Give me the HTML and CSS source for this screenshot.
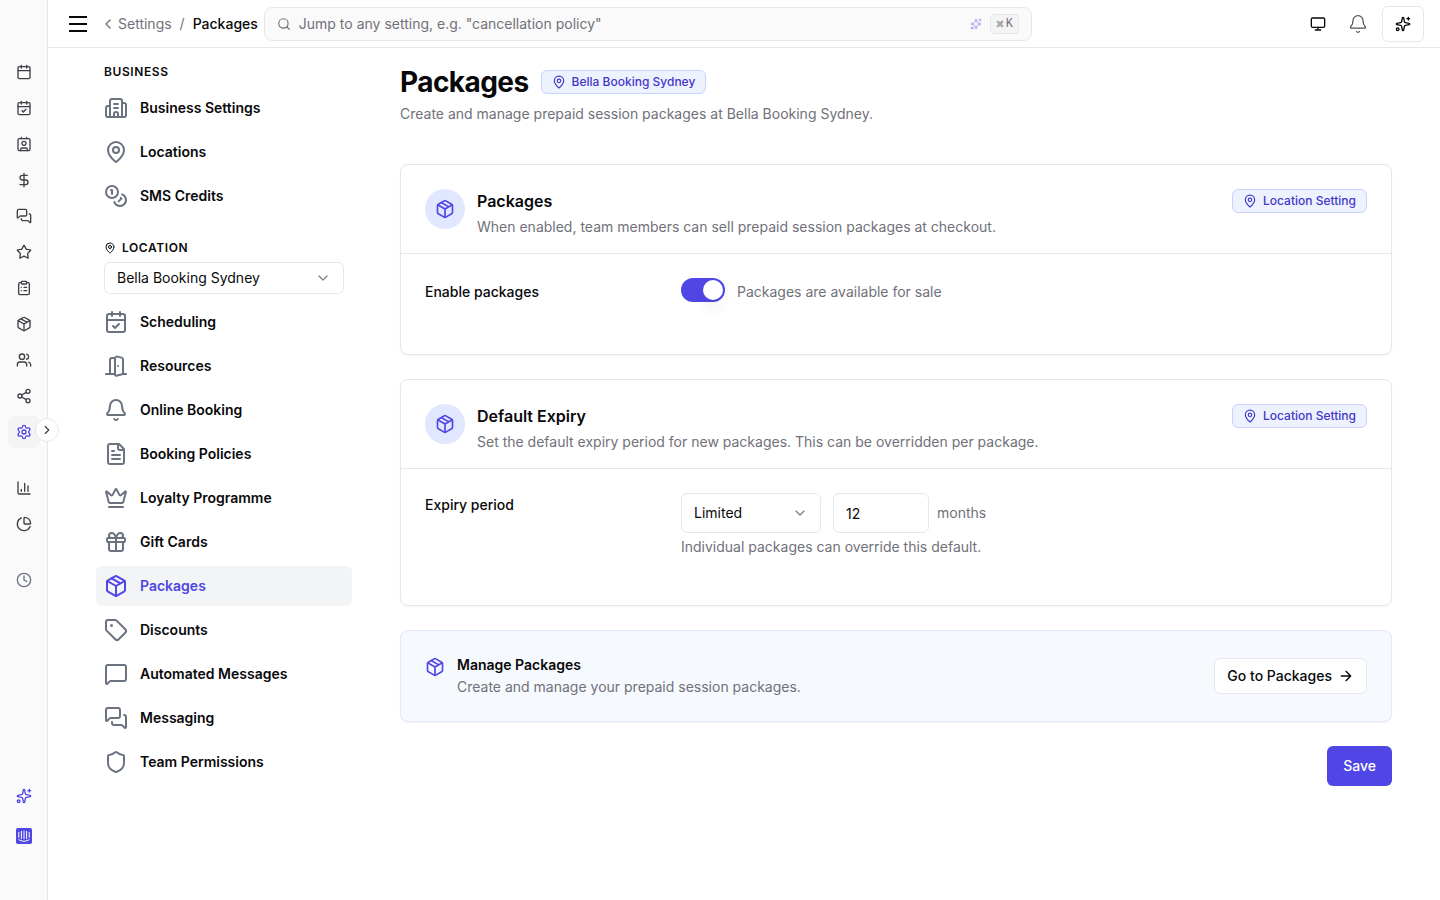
FILE: index.html
```html
<!DOCTYPE html>
<html lang="en">
<head>
  <meta charset="UTF-8" />
  <meta name="viewport" content="width=device-width, initial-scale=1.0" />
  <title>Packages - Settings</title>
  <link rel="stylesheet" href="styles.css">
</head>
<body>

  <!-- ICON SPRITE -->
  <svg class="sprite" aria-hidden="true">
    <symbol id="i-calendar" viewBox="0 0 24 24"><path d="M8 2v4M16 2v4M3 10h18"/><rect x="3" y="4" width="18" height="18" rx="2"/></symbol>
    <symbol id="i-calendar-check" viewBox="0 0 24 24"><path d="M8 2v4M16 2v4M3 10h18M9 16l2 2 4-4"/><rect x="3" y="4" width="18" height="18" rx="2"/></symbol>
    <symbol id="i-contact" viewBox="0 0 24 24"><path d="M16 2v2M8 2v2M7 22v-2a2 2 0 0 1 2-2h6a2 2 0 0 1 2 2v2"/><circle cx="12" cy="11" r="3"/><rect x="3" y="4" width="18" height="18" rx="2"/></symbol>
    <symbol id="i-dollar" viewBox="0 0 24 24"><path d="M12 2v20M17 5H9.5a3.5 3.5 0 0 0 0 7h5a3.5 3.5 0 0 1 0 7H6"/></symbol>
    <symbol id="i-messages" viewBox="0 0 24 24"><path d="M16 10a2 2 0 0 1-2 2H6.828a2 2 0 0 0-1.414.586l-2.202 2.202A.71.71 0 0 1 2 14.286V4a2 2 0 0 1 2-2h10a2 2 0 0 1 2 2z"/><path d="M20 9a2 2 0 0 1 2 2v10.286a.71.71 0 0 1-1.212.502l-2.202-2.202A2 2 0 0 0 17.172 19H10a2 2 0 0 1-2-2v-1"/></symbol>
    <symbol id="i-message" viewBox="0 0 24 24"><path d="M22 17a2 2 0 0 1-2 2H6.828a2 2 0 0 0-1.414.586l-2.202 2.202A.71.71 0 0 1 2 21.286V5a2 2 0 0 1 2-2h16a2 2 0 0 1 2 2z"/></symbol>
    <symbol id="i-star" viewBox="0 0 24 24"><path d="M11.525 2.295a.53.53 0 0 1 .95 0l2.31 4.679a2.123 2.123 0 0 0 1.595 1.16l5.166.756a.53.53 0 0 1 .294.904l-3.736 3.638a2.123 2.123 0 0 0-.611 1.878l.882 5.14a.53.53 0 0 1-.771.56l-4.618-2.428a2.122 2.122 0 0 0-1.973 0L6.396 21.01a.53.53 0 0 1-.77-.56l.881-5.139a2.122 2.122 0 0 0-.611-1.879L2.16 9.795a.53.53 0 0 1 .294-.906l5.165-.755a2.122 2.122 0 0 0 1.597-1.16z"/></symbol>
    <symbol id="i-clipboard" viewBox="0 0 24 24"><rect x="8" y="2" width="8" height="4" rx="1"/><path d="M16 4h2a2 2 0 0 1 2 2v14a2 2 0 0 1-2 2H6a2 2 0 0 1-2-2V6a2 2 0 0 1 2-2h2M12 11h4M12 16h4M8 11h.01M8 16h.01"/></symbol>
    <symbol id="i-package" viewBox="0 0 24 24"><path d="M11 21.73a2 2 0 0 0 2 0l7-4A2 2 0 0 0 21 16V8a2 2 0 0 0-1-1.73l-7-4a2 2 0 0 0-2 0l-7 4A2 2 0 0 0 3 8v8a2 2 0 0 0 1 1.73z"/><path d="M12 22V12M3.29 7L12 12l8.71-5M7.5 4.27l9 5.15"/></symbol>
    <symbol id="i-users" viewBox="0 0 24 24"><path d="M16 21v-2a4 4 0 0 0-4-4H6a4 4 0 0 0-4 4v2M16 3.13a4 4 0 0 1 0 7.75M22 21v-2a4 4 0 0 0-3-3.87"/><circle cx="9" cy="7" r="4"/></symbol>
    <symbol id="i-share" viewBox="0 0 24 24"><circle cx="18" cy="5" r="3"/><circle cx="6" cy="12" r="3"/><circle cx="18" cy="19" r="3"/><path d="M8.59 13.51l6.83 3.98M15.41 6.51l-6.82 3.98"/></symbol>
    <symbol id="i-settings" viewBox="0 0 24 24"><path d="M9.671 4.136a2.34 2.34 0 0 1 4.659 0 2.34 2.34 0 0 0 3.319 1.915 2.34 2.34 0 0 1 2.33 4.033 2.34 2.34 0 0 0 0 3.831 2.34 2.34 0 0 1-2.33 4.033 2.34 2.34 0 0 0-3.319 1.915 2.34 2.34 0 0 1-4.659 0 2.34 2.34 0 0 0-3.32-1.915 2.34 2.34 0 0 1-2.33-4.033 2.34 2.34 0 0 0 0-3.831A2.34 2.34 0 0 1 6.35 6.051a2.34 2.34 0 0 0 3.319-1.915"/><circle cx="12" cy="12" r="3"/></symbol>
    <symbol id="i-chart" viewBox="0 0 24 24"><path d="M3 3v16a2 2 0 0 0 2 2h16M18 17V9M13 17V5M8 17v-3"/></symbol>
    <symbol id="i-pie" viewBox="0 0 24 24"><path d="M21 12c.552 0 1.005-.449.95-.998a10 10 0 0 0-8.953-8.951c-.55-.055-.998.398-.998.95v8a1 1 0 0 0 1 1z"/><path d="M21.21 15.89A10 10 0 1 1 8 2.83"/></symbol>
    <symbol id="i-clock" viewBox="0 0 24 24"><circle cx="12" cy="12" r="10"/><path d="M12 6v6l4 2"/></symbol>
    <symbol id="i-sparkles" viewBox="0 0 24 24"><path d="M11.017 2.814a1 1 0 0 1 1.966 0l1.051 5.558a2 2 0 0 0 1.594 1.594l5.558 1.051a1 1 0 0 1 0 1.966l-5.558 1.051a2 2 0 0 0-1.594 1.594l-1.051 5.558a1 1 0 0 1-1.966 0l-1.051-5.558a2 2 0 0 0-1.594-1.594l-5.558-1.051a1 1 0 0 1 0-1.966l5.558-1.051a2 2 0 0 0 1.594-1.594zM20 2v4M22 4h-4"/><circle cx="4" cy="20" r="2"/></symbol>
    <symbol id="i-building" viewBox="0 0 24 24"><path d="M10 12h4M10 8h4M14 21v-3a2 2 0 0 0-4 0v3M6 10H4a2 2 0 0 0-2 2v7a2 2 0 0 0 2 2h16a2 2 0 0 0 2-2V9a2 2 0 0 0-2-2h-2"/><path d="M6 21V5a2 2 0 0 1 2-2h8a2 2 0 0 1 2 2v16"/></symbol>
    <symbol id="i-pin" viewBox="0 0 24 24"><path d="M20 10c0 4.993-5.539 10.193-7.399 11.799a1 1 0 0 1-1.202 0C9.539 20.193 4 14.993 4 10a8 8 0 0 1 16 0"/><circle cx="12" cy="10" r="3"/></symbol>
    <symbol id="i-coins" viewBox="0 0 24 24"><circle cx="8" cy="8" r="6"/><path d="M18.09 10.37A6 6 0 1 1 10.34 18M7 6h1v4M16.71 13.88l.7.71-2.82 2.82"/></symbol>
    <symbol id="i-door" viewBox="0 0 24 24"><path d="M11 20H2M11 4.562v16.157a1 1 0 0 0 1.242.97L19 20V5.562a2 2 0 0 0-1.515-1.94l-4-1A2 2 0 0 0 11 4.561zM11 4H8a2 2 0 0 0-2 2v14M14 12h.01M22 20h-3"/></symbol>
    <symbol id="i-bell" viewBox="0 0 24 24"><path d="M10.268 21a2 2 0 0 0 3.464 0M3.262 15.326A1 1 0 0 0 4 17h16a1 1 0 0 0 .74-1.673C19.41 13.956 18 12.499 18 8A6 6 0 0 0 6 8c0 4.499-1.411 5.956-2.738 7.326"/></symbol>
    <symbol id="i-file" viewBox="0 0 24 24"><path d="M15 2H6a2 2 0 0 0-2 2v16a2 2 0 0 0 2 2h12a2 2 0 0 0 2-2V7zM14 2v4a2 2 0 0 0 2 2h4M10 9H8M16 13H8M16 17H8"/></symbol>
    <symbol id="i-crown" viewBox="0 0 24 24"><path d="M11.562 3.266a.5.5 0 0 1 .876 0L15.39 8.87a1 1 0 0 0 1.516.294L21.183 5.5a.5.5 0 0 1 .798.519l-2.834 10.246a1 1 0 0 1-.956.734H5.81a1 1 0 0 1-.957-.734L2.02 6.02a.5.5 0 0 1 .798-.519l4.276 3.664a1 1 0 0 0 1.516-.294zM5 21h14"/></symbol>
    <symbol id="i-gift" viewBox="0 0 24 24"><rect x="3" y="8" width="18" height="4" rx="1"/><path d="M12 8v13M19 12v7a2 2 0 0 1-2 2H7a2 2 0 0 1-2-2v-7M7.5 8a2.5 2.5 0 0 1 0-5A4.8 8 0 0 1 12 8a4.8 8 0 0 1 4.5-5 2.5 2.5 0 0 1 0 5"/></symbol>
    <symbol id="i-tag" viewBox="0 0 24 24"><path d="M12.586 2.586A2 2 0 0 0 11.172 2H4a2 2 0 0 0-2 2v7.172a2 2 0 0 0 .586 1.414l8.704 8.704a2.426 2.426 0 0 0 3.42 0l6.58-6.58a2.426 2.426 0 0 0 0-3.42z"/><circle cx="7.5" cy="7.5" r=".5" fill="currentColor"/></symbol>
    <symbol id="i-shield" viewBox="0 0 24 24"><path d="M20 13c0 5-3.5 7.5-7.66 8.95a1 1 0 0 1-.67-.01C7.5 20.5 4 18 4 13V6a1 1 0 0 1 1-1c2 0 4.5-1.2 6.24-2.72a1.17 1.17 0 0 1 1.52 0C14.51 3.81 17 5 19 5a1 1 0 0 1 1 1z"/></symbol>
    <symbol id="i-monitor" viewBox="0 0 24 24"><rect x="2" y="3" width="20" height="14" rx="2"/><path d="M8 21h8M12 17v4"/></symbol>
    <symbol id="i-search" viewBox="0 0 24 24"><circle cx="11" cy="11" r="8"/><path d="M21 21l-4.34-4.34"/></symbol>
    <symbol id="i-left" viewBox="0 0 24 24"><path d="M15 18l-6-6 6-6"/></symbol>
    <symbol id="i-right" viewBox="0 0 24 24"><path d="M9 18l6-6-6-6"/></symbol>
    <symbol id="i-down" viewBox="0 0 24 24"><path d="M6 9l6 6 6-6"/></symbol>
    <symbol id="i-arrow" viewBox="0 0 24 24"><path d="M5 12h14M12 5l7 7-7 7"/></symbol>
    <symbol id="i-command" viewBox="0 0 24 24"><path d="M15 6v12a3 3 0 1 0 3-3H6a3 3 0 1 0 3 3V6a3 3 0 1 0-3 3h12a3 3 0 1 0-3-3"/></symbol>
    <symbol id="i-chat" viewBox="0 0 16 16"><rect width="16" height="16" rx="2" fill="currentColor" stroke="none"/><path d="M2.8 4.3v5M5.4 3.3v7.2M8 3v7.8M10.6 3.3v7.2M13.2 4.3v5M2.8 11.6c3 2.2 7.4 2.2 10.4 0" stroke="#fff" stroke-width="1"/></symbol>
  </svg>

  <div class="app">

    <!-- ICON RAIL -->
    <aside class="rail">
      <nav class="rail-nav" aria-label="Main">
        <a href="#" class="rail-link" aria-label="Calendar"><svg class="icon"><use href="#i-calendar"/></svg></a>
        <a href="#" class="rail-link" aria-label="Bookings"><svg class="icon"><use href="#i-calendar-check"/></svg></a>
        <a href="#" class="rail-link" aria-label="Clients"><svg class="icon"><use href="#i-contact"/></svg></a>
        <a href="#" class="rail-link" aria-label="Sales"><svg class="icon"><use href="#i-dollar"/></svg></a>
        <a href="#" class="rail-link" aria-label="Messages"><svg class="icon"><use href="#i-messages"/></svg></a>
        <a href="#" class="rail-link" aria-label="Reviews"><svg class="icon"><use href="#i-star"/></svg></a>
        <a href="#" class="rail-link" aria-label="Forms"><svg class="icon"><use href="#i-clipboard"/></svg></a>
        <a href="#" class="rail-link" aria-label="Products"><svg class="icon"><use href="#i-package"/></svg></a>
        <a href="#" class="rail-link" aria-label="Team"><svg class="icon"><use href="#i-users"/></svg></a>
        <a href="#" class="rail-link" aria-label="Share"><svg class="icon"><use href="#i-share"/></svg></a>
        <a href="#" class="rail-link active" aria-label="Settings"><svg class="icon"><use href="#i-settings"/></svg></a>
      </nav>
      <nav class="rail-nav" aria-label="Reports">
        <a href="#" class="rail-link" aria-label="Reports"><svg class="icon"><use href="#i-chart"/></svg></a>
        <a href="#" class="rail-link" aria-label="Insights"><svg class="icon"><use href="#i-pie"/></svg></a>
      </nav>
      <nav class="rail-nav" aria-label="Time">
        <a href="#" class="rail-link muted" aria-label="Recent"><svg class="icon"><use href="#i-clock"/></svg></a>
      </nav>
      <div class="rail-bottom">
        <button class="rail-link accent" aria-label="Assistant"><svg class="icon"><use href="#i-sparkles"/></svg></button>
        <button class="rail-link accent" aria-label="Support chat"><svg class="icon"><use href="#i-chat"/></svg></button>
      </div>
      <button class="rail-toggle" aria-label="Expand sidebar"><svg class="icon icon-md"><use href="#i-right"/></svg></button>
    </aside>

    <div class="page">

      <!-- TOP BAR -->
      <header class="topbar">
        <button class="menu-btn" aria-label="Menu"><span></span><span></span><span></span></button>
        <nav class="breadcrumb" aria-label="Breadcrumb">
          <a href="#" class="crumb"><svg class="icon"><use href="#i-left"/></svg>Settings</a>
          <span class="slash">/</span>
          <span class="crumb-current">Packages</span>
        </nav>
        <div class="search">
          <svg class="icon icon-md"><use href="#i-search"/></svg>
          <input type="text" aria-label="Search settings" placeholder="Jump to any setting, e.g. &quot;cancellation policy&quot;" />
          <svg class="icon icon-sm search-ai"><use href="#i-sparkles"/></svg>
          <kbd><svg class="icon icon-xs"><use href="#i-command"/></svg>K</kbd>
        </div>
        <div class="topbar-actions">
          <button class="top-btn" aria-label="Display"><svg class="icon"><use href="#i-monitor"/></svg></button>
          <button class="top-btn top-bell" aria-label="Notifications"><svg class="icon icon-lg"><use href="#i-bell"/></svg></button>
          <button class="ai-btn" aria-label="Ask AI"><svg class="icon"><use href="#i-sparkles"/></svg></button>
        </div>
      </header>

      <div class="layout">

        <!-- SETTINGS NAV -->
        <nav class="settings-nav" aria-label="Settings">
          <h2 class="nav-heading">Business</h2>
          <ul class="nav-list">
            <li><a href="#"><svg class="icon"><use href="#i-building"/></svg>Business Settings</a></li>
            <li><a href="#"><svg class="icon"><use href="#i-pin"/></svg>Locations</a></li>
            <li><a href="#"><svg class="icon"><use href="#i-coins"/></svg>SMS Credits</a></li>
          </ul>
          <label class="nav-heading location-heading" for="location"><svg class="icon icon-sm"><use href="#i-pin"/></svg>Location</label>
          <div class="select nav-select">
            <select id="location"><option>Bella Booking Sydney</option></select>
            <svg class="icon"><use href="#i-down"/></svg>
          </div>
          <ul class="nav-list">
            <li><a href="#"><svg class="icon"><use href="#i-calendar-check"/></svg>Scheduling</a></li>
            <li><a href="#"><svg class="icon"><use href="#i-door"/></svg>Resources</a></li>
            <li><a href="#"><svg class="icon"><use href="#i-bell"/></svg>Online Booking</a></li>
            <li><a href="#"><svg class="icon"><use href="#i-file"/></svg>Booking Policies</a></li>
            <li><a href="#"><svg class="icon"><use href="#i-crown"/></svg>Loyalty Programme</a></li>
            <li><a href="#"><svg class="icon"><use href="#i-gift"/></svg>Gift Cards</a></li>
            <li><a href="#" class="active" aria-current="page"><svg class="icon"><use href="#i-package"/></svg>Packages</a></li>
            <li><a href="#"><svg class="icon"><use href="#i-tag"/></svg>Discounts</a></li>
            <li><a href="#"><svg class="icon"><use href="#i-message"/></svg>Automated Messages</a></li>
            <li><a href="#"><svg class="icon"><use href="#i-messages"/></svg>Messaging</a></li>
            <li><a href="#"><svg class="icon"><use href="#i-shield"/></svg>Team Permissions</a></li>
          </ul>
        </nav>

        <!-- CONTENT -->
        <main class="content">
          <div class="page-head">
            <div class="page-title">
              <h1>Packages</h1>
              <span class="badge"><svg class="icon icon-md"><use href="#i-pin"/></svg>Bella Booking Sydney</span>
            </div>
            <p>Create and manage prepaid session packages at Bella Booking Sydney.</p>
          </div>

          <form class="cards">
            <section class="card">
              <div class="card-head">
                <span class="card-icon"><svg class="icon icon-lg"><use href="#i-package"/></svg></span>
                <div class="card-text">
                  <h3>Packages</h3>
                  <p>When enabled, team members can sell prepaid session packages at checkout.</p>
                </div>
                <span class="badge"><svg class="icon icon-md"><use href="#i-pin"/></svg>Location Setting</span>
              </div>
              <div class="setting setting-toggle">
                <label for="enable">Enable packages</label>
                <div class="control">
                  <input type="checkbox" role="switch" id="enable" class="switch" checked />
                  <span class="toggle-text">Packages are available for sale</span>
                </div>
              </div>
            </section>

            <section class="card">
              <div class="card-head">
                <span class="card-icon"><svg class="icon icon-lg"><use href="#i-package"/></svg></span>
                <div class="card-text">
                  <h3>Default Expiry</h3>
                  <p>Set the default expiry period for new packages. This can be overridden per package.</p>
                </div>
                <span class="badge"><svg class="icon icon-md"><use href="#i-pin"/></svg>Location Setting</span>
              </div>
              <div class="setting">
                <label for="expiry">Expiry period</label>
                <div>
                  <div class="control">
                    <div class="select expiry-select">
                      <select id="expiry"><option>Limited</option><option>Unlimited</option></select>
                      <svg class="icon"><use href="#i-down"/></svg>
                    </div>
                    <div class="months">
                      <input type="text" inputmode="numeric" id="months" value="12" />
                      <label for="months">months</label>
                    </div>
                  </div>
                  <p class="help">Individual packages can override this default.</p>
                </div>
              </div>
            </section>

            <section class="card manage">
              <svg class="icon icon-lg"><use href="#i-package"/></svg>
              <div class="manage-text">
                <h4>Manage Packages</h4>
                <p>Create and manage your prepaid session packages.</p>
              </div>
              <a href="#" class="btn-outline">Go to Packages<svg class="icon"><use href="#i-arrow"/></svg></a>
            </section>

            <button type="submit" class="btn-save">Save</button>
          </form>
        </main>

      </div>
    </div>
  </div>

</body>
</html>
```
FILE: styles.css
```css
* {
  box-sizing: border-box;
}

body {
  margin: 0;
  font-family: Inter, sans-serif;
  font-size: 14px;
  line-height: 20px;
  color: #09090b;
  background: #fff;
}

h1, h2, h3, h4, p, ul {
  margin: 0;
  padding: 0;
}

ul {
  list-style: none;
}

a {
  color: inherit;
  text-decoration: none;
}

button, input, select {
  font: inherit;
  color: inherit;
}

button {
  padding: 0;
  border: none;
  background: none;
  cursor: pointer;
}

.sprite {
  display: none;
}

.icon {
  width: 16px;
  height: 16px;
  flex-shrink: 0;
  fill: none;
  stroke: currentColor;
  stroke-width: 2;
  stroke-linecap: round;
  stroke-linejoin: round;
}

.icon-xs {
  width: 8px;
  height: 8px;
}

.icon-sm {
  width: 12px;
  height: 12px;
}

.icon-md {
  width: 14px;
  height: 14px;
}

.icon-lg {
  width: 20px;
  height: 20px;
}

.app {
  display: flex;
  min-height: 100vh;
}

/* rail */
.rail {
  position: relative;
  width: 48px;
  flex-shrink: 0;
  display: flex;
  flex-direction: column;
  gap: 24px;
  padding: 56px 7px 48px 8px;
  background: #fafafa;
  border-right: 1px solid #e5e7eb;
}

.rail-nav {
  display: flex;
  flex-direction: column;
  gap: 4px;
}

.rail-link {
  display: flex;
  align-items: center;
  justify-content: center;
  width: 32px;
  height: 32px;
  border-radius: 6px;
  color: #3f3f46;
}

.rail-link.active {
  background: #f4f4f5;
  color: #4f46e5;
}

.rail-link.muted {
  color: #6b7280;
}

.rail-link.accent {
  color: #4f46e5;
}

.rail-bottom {
  display: flex;
  flex-direction: column;
  gap: 8px;
  margin-top: auto;
}

.rail-toggle {
  position: absolute;
  top: 418px;
  right: -12px;
  display: flex;
  align-items: center;
  justify-content: center;
  width: 24px;
  height: 24px;
  border: 1px solid #e5e7eb;
  border-radius: 50%;
  background: #fff;
  color: #3f3f46;
}

.page {
  flex: 1;
  min-width: 0;
}

/* top bar */
.topbar {
  display: flex;
  align-items: center;
  gap: 6px;
  height: 48px;
  padding: 0 16px 0 20px;
  border-bottom: 1px solid #e5e7eb;
}

.menu-btn {
  display: flex;
  flex-direction: column;
  gap: 5px;
  width: 20px;
  padding: 0 1px;
  margin-right: 6px;
}

.menu-btn span {
  height: 2px;
  background: #09090b;
}

.breadcrumb {
  display: flex;
  align-items: center;
  gap: 8px;
}

.crumb {
  display: flex;
  align-items: center;
  gap: 2px;
  color: #71717a;
}

.slash {
  color: #71717a;
}

.crumb-current {
  font-weight: 500;
}

.search {
  display: flex;
  align-items: center;
  gap: 8px;
  flex: 0 1 768px;
  height: 34px;
  padding: 0 12px;
  border: 1px solid #e5e7eb;
  border-radius: 8px;
  background: #fafafa;
  color: #71717a;
}

.search input {
  flex: 1;
  min-width: 0;
  padding: 0;
  border: none;
  outline: none;
  background: none;
}

.search input::placeholder {
  color: #71717a;
  opacity: 1;
}

.search-ai {
  color: #a5a0f2;
}

kbd {
  display: flex;
  align-items: center;
  gap: 2px;
  height: 20px;
  padding: 0 5px;
  border: 1px solid #e5e7eb;
  border-radius: 4px;
  background: #f4f4f5;
  font-family: "Liberation Mono", monospace;
  font-size: 12px;
}

.topbar-actions {
  display: flex;
  align-items: center;
  gap: 8px;
  margin-left: auto;
}

.top-btn {
  display: flex;
  align-items: center;
  justify-content: center;
  width: 32px;
  height: 32px;
}

.top-bell {
  color: #52525b;
}

.top-bell .icon {
  stroke-width: 1.5;
}

.ai-btn {
  display: flex;
  align-items: center;
  justify-content: center;
  width: 42px;
  height: 36px;
  border: 1px solid #e5e7eb;
  border-radius: 6px;
}

.layout {
  display: flex;
  gap: 48px;
  padding: 16px 48px;
}

/* settings nav */
.settings-nav {
  width: 256px;
  flex-shrink: 0;
}

.nav-heading {
  display: flex;
  align-items: center;
  gap: 6px;
  height: 16px;
  padding: 0 8px;
  font-size: 12px;
  line-height: 16px;
  font-weight: 600;
  letter-spacing: 0.05em;
  text-transform: uppercase;
}

.nav-list {
  display: flex;
  flex-direction: column;
  gap: 4px;
  margin-top: 8px;
}

.nav-list a {
  display: flex;
  align-items: center;
  gap: 12px;
  height: 40px;
  padding: 0 8px;
  border-radius: 6px;
  font-weight: 600;
}

.nav-list .icon {
  width: 24px;
  height: 24px;
  color: #6b7280;
}

.nav-list .active,
.nav-list .active .icon {
  color: #4f46e5;
}

.nav-list .active {
  background: #f3f4f6;
}

.location-heading {
  margin-top: 24px;
}

.select {
  display: grid;
  align-items: center;
}

.select select,
.select .icon {
  grid-area: 1 / 1;
}

.select select {
  appearance: none;
  width: 100%;
  height: 100%;
  padding: 0 32px 0 12px;
  border: 1px solid #e5e7eb;
  border-radius: 6px;
  background: #fff;
}

.select .icon {
  justify-self: end;
  margin-right: 13px;
  color: #84848b;
  pointer-events: none;
}

.nav-select {
  height: 32px;
  margin: 6px 8px 0;
}

/* content */
.content {
  flex: 1;
  min-width: 0;
}

.page-head p,
.card-text p,
.manage-text p,
.toggle-text,
.help {
  color: #71717a;
}

.page-title {
  display: flex;
  align-items: center;
  gap: 12px;
  margin-bottom: 4px;
}

h1 {
  font-size: 28px;
  line-height: 36px;
  font-weight: 700;
  letter-spacing: -0.02em;
}

.badge {
  display: inline-flex;
  align-items: center;
  gap: 6px;
  height: 24px;
  padding: 0 10px;
  border: 1px solid #c7d2fe;
  border-radius: 6px;
  background: #eef2ff;
  color: #4338ca;
  font-size: 12px;
  font-weight: 500;
  white-space: nowrap;
}

.cards {
  display: flex;
  flex-direction: column;
  gap: 24px;
  margin-top: 40px;
}

.card {
  border: 1px solid #e5e7eb;
  border-radius: 8px;
  background: #fff;
  box-shadow: 0 1px 2px rgba(0, 0, 0, 0.05);
}

.card-head {
  display: flex;
  align-items: flex-start;
  gap: 12px;
  padding: 24px 24px 16px;
  border-bottom: 1px solid #e5e7eb;
}

.card-icon {
  display: flex;
  align-items: center;
  justify-content: center;
  width: 40px;
  height: 40px;
  border-radius: 50%;
  background: #e0e7ff;
  color: #4f46e5;
}

.card-text {
  flex: 1;
}

h3 {
  margin-bottom: 4px;
  font-size: 16px;
  line-height: 24px;
  font-weight: 600;
}

.setting {
  display: grid;
  grid-template-columns: 240px 1fr;
  gap: 16px;
  padding: 24px 24px 48px;
}

.setting > label {
  line-height: 24px;
  font-weight: 500;
}

.setting-toggle > label,
.toggle-text {
  line-height: 28px;
}

.control {
  display: flex;
  gap: 12px;
}

.switch {
  appearance: none;
  display: flex;
  width: 44px;
  height: 24px;
  margin: 0;
  padding: 2px;
  border-radius: 12px;
  background: #d4d4d8;
  cursor: pointer;
}

.switch::before {
  content: "";
  width: 20px;
  height: 20px;
  border-radius: 50%;
  background: #fff;
  box-shadow: 0 10px 15px -3px rgba(0, 0, 0, 0.1);
}

.switch:checked {
  justify-content: flex-end;
  background: #4f46e5;
}

.expiry-select {
  width: 140px;
  height: 40px;
}

.months {
  display: flex;
  align-items: center;
  gap: 8px;
  color: #71717a;
}

.months input {
  width: 96px;
  height: 40px;
  padding: 0 12px;
  border: 1px solid #e5e7eb;
  border-radius: 6px;
  color: #09090b;
}

.help {
  margin-top: 4px;
}

.manage {
  display: flex;
  align-items: flex-start;
  gap: 12px;
  padding: 24px;
  border-color: #e0e7ff;
  background: #f6f9fe;
}

.manage > .icon {
  margin-top: 2px;
  color: #4f46e5;
}

.manage-text {
  flex: 1;
}

h4 {
  font-size: 14px;
  line-height: 20px;
  font-weight: 600;
}

.manage-text p {
  margin-top: 2px;
}

.btn-outline {
  display: flex;
  align-items: center;
  align-self: center;
  gap: 6px;
  height: 36px;
  padding: 0 12px;
  border: 1px solid #e5e7eb;
  border-radius: 6px;
  background: #fff;
  font-weight: 500;
}

.btn-save {
  align-self: flex-end;
  height: 40px;
  padding: 0 16px;
  border-radius: 6px;
  background: #4f46e5;
  color: #fff;
  font-weight: 500;
}

@media (max-width: 900px) {
  .layout {
    flex-direction: column;
  }
}
```
